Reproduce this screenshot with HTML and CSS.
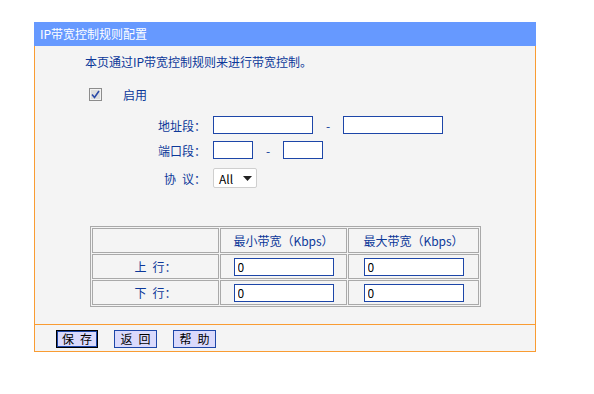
FILE: index.html
```html
<!DOCTYPE html>
<html lang="zh-CN">
<head>
    <meta charset="UTF-8">
    <title>IP带宽控制规则配置</title>
    <link rel="stylesheet" href="styles.css">
</head>
<body>
    <div class="panel">
        <div class="panel-title">IP带宽控制规则配置</div>

        <div class="panel-body">
            <p class="intro">本页通过IP带宽控制规则来进行带宽控制。</p>

            <div class="enable-row">
                <svg class="check" width="13" height="13" viewBox="0 0 13 13">
                    <rect x="0.5" y="0.5" width="12" height="12" fill="#dedede" stroke="#8c8c8c"/>
                    <rect x="1.5" y="1.5" width="10" height="10" fill="none" stroke="#f2f2f2"/>
                    <path d="M3 6.5 L5.5 9.5 L10 3" fill="none" stroke="#2b4aa8" stroke-width="1.6"/>
                </svg>
                <span class="enable-label">启用</span>
            </div>

            <div class="form-row row-addr">
                <label class="form-label">地址段：</label>
                <input type="text" class="txt txt-wide">
                <span class="dash">-</span>
                <input type="text" class="txt txt-wide">
            </div>
            <div class="form-row row-port">
                <label class="form-label">端口段：</label>
                <input type="text" class="txt txt-short">
                <span class="dash">-</span>
                <input type="text" class="txt txt-short">
            </div>
            <div class="form-row row-proto">
                <label class="form-label">协&ensp;议：</label>
                <div class="select">
                    <span>All</span>
                    <svg width="9" height="5" viewBox="0 0 9 5"><path d="M0 0 H9 L4.5 5 Z" fill="#222"/></svg>
                </div>
            </div>

            <table class="rate-table">
                <tr>
                    <td class="col-name"></td>
                    <td class="col-min">最小带宽（Kbps）</td>
                    <td class="col-max">最大带宽（Kbps）</td>
                </tr>
                <tr>
                    <td>上&ensp;行：</td>
                    <td><input type="text" class="txt txt-rate" value="0"></td>
                    <td><input type="text" class="txt txt-rate" value="0"></td>
                </tr>
                <tr>
                    <td>下&ensp;行：</td>
                    <td><input type="text" class="txt txt-rate" value="0"></td>
                    <td><input type="text" class="txt txt-rate" value="0"></td>
                </tr>
            </table>
        </div>

        <div class="panel-footer">
            <button class="btn btn-default">保&ensp;存</button>
            <button class="btn">返&ensp;回</button>
            <button class="btn">帮&ensp;助</button>
        </div>
    </div>
</body>
</html>
```

FILE: styles.css
```css
:root {
    --title-bg: #6699ff;
    --body-bg: #f4f4f4;
    --frame: #f99c33;
    --text-blue: #0c3899;
    --input-border: #1d46a8;
    --grid-line: #a9a9a9;
    --btn-bg: #dadafc;
}

body {
    margin: 0;
    padding: 22px 0 0 34px;
    background: #ffffff;
    font-family: "Noto Sans CJK SC", sans-serif;
    font-size: 12px;
    color: var(--text-blue);
}

.panel {
    width: 502px;
}
.panel-title {
    height: 24px;
    line-height: 23px;
    padding-left: 6px;
    background: var(--title-bg);
    color: #ffffff;
}
.panel-body {
    height: 278px;
    padding-left: 50px;
    background: var(--body-bg);
    border-left: 1px solid var(--frame);
    border-right: 1px solid var(--frame);
    border-bottom: 1px solid var(--frame);
    display: flex;
    flex-direction: column;
    align-items: flex-start;
}
.intro {
    margin: 7px 0 0 0;
    height: 18px;
    line-height: 18px;
}
.enable-row {
    margin-top: 14px;
    height: 18px;
    display: flex;
    align-items: center;
    padding-left: 4px;
}
.enable-label {
    margin-left: 21px;
}

.form-row {
    display: flex;
    align-items: center;
}
.row-addr {
    margin-top: 13px;
    height: 18px;
}
.row-port {
    margin-top: 7px;
    height: 18px;
}
.row-proto {
    margin-top: 9px;
    height: 20px;
}
.form-label {
    width: 121px;
    margin-right: 7px;
    text-align: right;
    white-space: pre;
}
.dash {
    width: 30px;
    text-align: center;
}

.txt {
    box-sizing: border-box;
    height: 18px;
    margin: 0;
    padding: 0 3px;
    border: 1px solid var(--input-border);
    background: #ffffff;
    font-family: "Noto Sans CJK SC", sans-serif;
    font-size: 12px;
    color: #000000;
    outline: none;
}
.txt-wide {
    width: 100px;
}
.txt-short {
    width: 40px;
}
.txt-rate {
    width: 100px;
    height: 18px;
}

.select {
    box-sizing: border-box;
    width: 44px;
    height: 20px;
    padding: 0 4px 0 5px;
    border: 1px solid #cfcfcf;
    border-radius: 2px;
    background: #ffffff;
    color: #000000;
    display: flex;
    align-items: center;
    justify-content: space-between;
}

.rate-table {
    margin: 38px 0 0 5px;
    table-layout: fixed;
    border-collapse: separate;
    border-spacing: 1px;
    border: 1px solid var(--grid-line);
}
.rate-table td {
    height: 23px;
    padding: 0;
    border: 1px solid var(--grid-line);
    text-align: center;
    vertical-align: middle;
    white-space: pre;
}
.rate-table .col-name,
.rate-table .col-min {
    width: 125px;
}
.rate-table .col-max {
    width: 129px;
}
.rate-table .txt-rate {
    display: block;
    margin: 0 auto;
}

.panel-footer {
    height: 27px;
    padding: 5px 0 0 21px;
    box-sizing: border-box;
    background: var(--body-bg);
    border-left: 1px solid var(--frame);
    border-right: 1px solid var(--frame);
    border-bottom: 1px solid var(--frame);
    display: flex;
    align-items: flex-start;
    gap: 16px;
}
.btn {
    box-sizing: border-box;
    width: 43px;
    height: 18px;
    margin: 0;
    padding: 0;
    border: 1px solid var(--input-border);
    background: var(--btn-bg);
    font-family: "Noto Sans CJK SC", sans-serif;
    font-size: 12px;
    line-height: 16px;
    color: #000000;
    white-space: pre;
}
.btn-default {
    width: 42px;
    border-color: #000000;
    box-shadow: inset 0 0 0 1px var(--input-border);
}
```
